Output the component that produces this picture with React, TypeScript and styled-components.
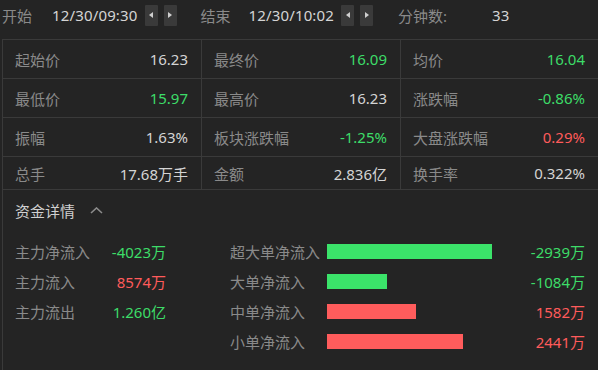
import React from "react";
import styled, { createGlobalStyle } from "styled-components";

const GREEN = "#3ddc68";
const RED = "#ff5b5b";

const GlobalStyle = createGlobalStyle`
  html, body {
    margin: 0;
    padding: 0;
    background: #242424;
  }
  body {
    font-family: "Noto Sans", "Noto Sans CJK SC", sans-serif;
    font-size: 15px;
    color: #d4d4d4;
  }
`;

type Tone = "white" | "green" | "red";

const toneColor = (tone: Tone) =>
  tone === "green" ? GREEN : tone === "red" ? RED : "#d4d4d4";

const stats: { label: string; value: string; tone: Tone }[][] = [
  [
    { label: "起始价", value: "16.23", tone: "white" },
    { label: "最终价", value: "16.09", tone: "green" },
    { label: "均价", value: "16.04", tone: "green" },
  ],
  [
    { label: "最低价", value: "15.97", tone: "green" },
    { label: "最高价", value: "16.23", tone: "white" },
    { label: "涨跌幅", value: "-0.86%", tone: "green" },
  ],
  [
    { label: "振幅", value: "1.63%", tone: "white" },
    { label: "板块涨跌幅", value: "-1.25%", tone: "green" },
    { label: "大盘涨跌幅", value: "0.29%", tone: "red" },
  ],
  [
    { label: "总手", value: "17.68万手", tone: "white" },
    { label: "金额", value: "2.836亿", tone: "white" },
    { label: "换手率", value: "0.322%", tone: "white" },
  ],
];

const mainFlows: { label: string; value: string; tone: Tone }[] = [
  { label: "主力净流入", value: "-4023万", tone: "green" },
  { label: "主力流入", value: "8574万", tone: "red" },
  { label: "主力流出", value: "1.260亿", tone: "green" },
];

const orderFlows: { label: string; value: string; tone: Tone; width: number }[] = [
  { label: "超大单净流入", value: "-2939万", tone: "green", width: 165 },
  { label: "大单净流入", value: "-1084万", tone: "green", width: 60 },
  { label: "中单净流入", value: "1582万", tone: "red", width: 89 },
  { label: "小单净流入", value: "2441万", tone: "red", width: 136 },
];

const StepButtons = () => (
  <Steps>
    <StepButton>
      <svg width="4" height="6" viewBox="0 0 4 6">
        <path d="M4 0 L0 3 L4 6 Z" fill="#cfcfcf" />
      </svg>
    </StepButton>
    <StepButton>
      <svg width="4" height="6" viewBox="0 0 4 6">
        <path d="M0 0 L4 3 L0 6 Z" fill="#cfcfcf" />
      </svg>
    </StepButton>
  </Steps>
);

const App = () => {
  return (
    <>
      <GlobalStyle />
      <Page>
        <TopBar>
          <BarLabel>开始</BarLabel>
          <TimeText $gap={20}>12/30/09:30</TimeText>
          <StepButtons />
          <BarLabel $gap={24}>结束</BarLabel>
          <TimeText $gap={18}>12/30/10:02</TimeText>
          <StepButtons />
          <BarLabel $gap={25}>分钟数:</BarLabel>
          <TimeText $gap={45}>33</TimeText>
        </TopBar>

        <Panel>
          <StatGrid>
            {stats.map((row, r) =>
              row.map((cell, c) => (
                <StatCell key={`${r}-${c}`} $last={c === 2} $short={r === stats.length - 1}>
                  <Label>{cell.label}</Label>
                  <Value $tone={cell.tone}>{cell.value}</Value>
                </StatCell>
              ))
            )}
          </StatGrid>

          <Section>
            <SectionHeader>
              <SectionTitle>资金详情</SectionTitle>
              <svg width="13" height="7" viewBox="0 0 13 7">
                <path d="M1 6 L6.5 1 L12 6" fill="none" stroke="#8c8c8c" strokeWidth="1.6" />
              </svg>
            </SectionHeader>

            <FlowArea>
              <MainColumn>
                {mainFlows.map((f) => (
                  <MainRow key={f.label}>
                    <Label>{f.label}</Label>
                    <Value $tone={f.tone}>{f.value}</Value>
                  </MainRow>
                ))}
              </MainColumn>

              <OrderColumn>
                {orderFlows.map((f) => (
                  <OrderRow key={f.label}>
                    <Label>{f.label}</Label>
                    <Track>
                      <Bar $tone={f.tone} style={{ width: f.width }} />
                    </Track>
                    <Value $tone={f.tone}>{f.value}</Value>
                  </OrderRow>
                ))}
              </OrderColumn>
            </FlowArea>
          </Section>
        </Panel>
      </Page>
    </>
  );
};

export default App;

const Page = styled.div`
  width: 598px;
  height: 370px;
  overflow: hidden;
  background: #242424;
`;

const TopBar = styled.div`
  display: flex;
  align-items: center;
  height: 28px;
  padding: 1px 0 0 2px;
  margin-bottom: 10px;
`;

const BarLabel = styled.span<{ $gap?: number }>`
  color: #8a8a8a;
  margin-left: ${(p) => p.$gap ?? 0}px;
  white-space: nowrap;
`;

const TimeText = styled.span<{ $gap?: number }>`
  color: #d4d4d4;
  margin-left: ${(p) => p.$gap ?? 0}px;
  letter-spacing: 0.15px;
  white-space: nowrap;
`;

const Steps = styled.div`
  display: flex;
  gap: 6px;
  margin-left: 7px;
`;

const StepButton = styled.div`
  width: 13px;
  height: 21px;
  background: #3a3a3a;
  border-radius: 1px;
  display: flex;
  align-items: center;
  justify-content: center;
`;

const Panel = styled.div`
  margin-left: 2px;
  border-left: 1px solid #3a3a3a;
  border-top: 1px solid #3a3a3a;
  height: 331px;
`;

const StatGrid = styled.div`
  display: grid;
  grid-template-columns: 199px 199px 1fr;
`;

const StatCell = styled.div<{ $last: boolean; $short: boolean }>`
  box-sizing: border-box;
  height: ${(p) => (p.$short ? 33 : 39)}px;
  display: flex;
  align-items: center;
  justify-content: space-between;
  padding: 0 13px 0 12px;
  border-bottom: 1px solid #3a3a3a;
  border-right: ${(p) => (p.$last ? "none" : "1px solid #3a3a3a")};
`;

const Label = styled.span`
  color: #8a8a8a;
  white-space: nowrap;
`;

const Value = styled.span<{ $tone: Tone }>`
  color: ${(p) => toneColor(p.$tone)};
  white-space: nowrap;
  text-align: right;
`;

const Section = styled.div`
  padding: 0 13px 0 12px;
`;

const SectionHeader = styled.div`
  display: flex;
  align-items: center;
  gap: 15px;
  height: 40px;
`;

const SectionTitle = styled.span`
  color: #d0d0d0;
`;

const FlowArea = styled.div`
  display: flex;
  margin-top: 6px;
`;

const MainColumn = styled.div`
  width: 151px;
  display: flex;
  flex-direction: column;
`;

const MainRow = styled.div`
  height: 30px;
  display: flex;
  align-items: center;
  justify-content: space-between;
`;

const OrderColumn = styled.div`
  flex: 1;
  margin-left: 64px;
  display: flex;
  flex-direction: column;
`;

const OrderRow = styled.div`
  height: 30px;
  display: grid;
  grid-template-columns: 97px 1fr auto;
  align-items: center;
`;

const Track = styled.div`
  height: 15px;
`;

const Bar = styled.div<{ $tone: Tone }>`
  height: 15px;
  background: ${(p) => (p.$tone === "green" ? "#3be36a" : "#ff5c5c")};
`;
